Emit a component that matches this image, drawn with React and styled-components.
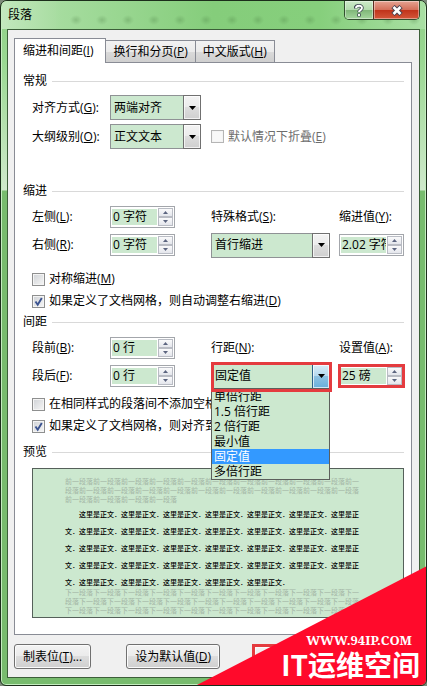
import React, { useState } from 'react';
import styled, { createGlobalStyle, css } from 'styled-components';

const GlobalStyle = createGlobalStyle`
  *, *::before, *::after {
    box-sizing: border-box;
  }

  body {
    margin: 0;
    background: #7d8a7a;
    color: #000;
    font-family: "Open Sans", "Noto Sans CJK SC", sans-serif;
    font-size: 12px;
    line-height: 16px;
  }

  button, input, select {
    margin: 0;
    color: inherit;
    font: inherit;
  }
`;

const FIELD = '#cce8cf';

const Window = styled.main`
  position: relative;
  overflow: hidden;
  min-height: 100vh;
  display: flex;
  flex-direction: column;
  padding: 0 6px 7px;
  border: 1px solid #1c2e1b;
  border-radius: 7px 7px 6px 6px;
  background: linear-gradient(#8fcf86 0, #9ad892 60px, #cfe9cb 189px, #78bc6e 190px, #78bc6e 100%);
  box-shadow: inset 0 0 0 1px #c5edc0;
`;

const TitleBar = styled.header`
  display: flex;
  justify-content: space-between;
  align-items: flex-start;
  height: 28px;
  margin: 0 -5px;
  padding: 0 5px 0 6px;
  background:
    radial-gradient(ellipse 6px 5px at 14px 19px, rgba(70, 120, 62, 0.28), transparent) 60px 0 / 26px 28px repeat-x,
    linear-gradient(90deg, #c3e8be 0, #a5dc9e 60px, #85cd7b 50%, #86cf7c 75%, #a9dfa3 100%);
  background-clip: content-box, border-box;
`;

const Title = styled.h1`
  margin: 0;
  padding: 6px 24px 6px 0;
  font-size: 12px;
  font-weight: 400;
  background: linear-gradient(90deg, #bfe7ba, #a9dda2);
`;

const WindowButtons = styled.div`
  display: flex;
  overflow: hidden;
  border: 1px solid #32502f;
  border-top: 0;
  border-radius: 0 0 5px 5px;
`;

const WindowButton = styled.button`
  display: flex;
  align-items: center;
  justify-content: center;
  width: ${({ $close }) => ($close ? 46 : 28)}px;
  height: 18px;
  padding: 0;
  border: 0;
  border-left: ${({ $close }) => ($close ? '1px solid #5b2c20' : 0)};
  background: ${({ $close }) => ($close
    ? 'linear-gradient(#e5a493 0, #d4705a 48%, #c0321a 50%, #d4573a 100%)'
    : 'linear-gradient(#cdeac9 0, #b3dcae 48%, #7fb678 50%, #a5d79e 100%)')};
  box-shadow: inset 0 0 0 1px rgba(255, 255, 255, 0.4);
`;

const Client = styled.div`
  flex: 1;
  padding: 8px 7px 8px 6px;
  border: 1px solid #3c5f39;
  background: #f0f0f0;
`;

const Tabs = styled.div`
  display: flex;
  align-items: flex-end;
`;

const Tab = styled.button`
  height: 22px;
  padding: 0 7px;
  border: 1px solid #898c95;
  border-bottom: 0;
  background: linear-gradient(#f2f2f2 0, #ebebeb 50%, #dadada 52%, #cfcfcf 100%);

  & + & {
    border-left: 0;
  }

  ${({ $active }) => $active && css`
    position: relative;
    z-index: 1;
    height: 25px;
    margin-bottom: -1px;
    padding: 0 12px 0 8px;
    background: #fff;
  `}
`;

const Panel = styled.form`
  padding: 8px 7px 16px 8px;
  border: 1px solid #898c95;
  background: #fff;
`;

const Section = styled.fieldset`
  min-width: 0;
  margin: 0 0 ${({ $gap }) => $gap || 0}px;
  padding: 0;
  border: 0;
`;

const Legend = styled.legend`
  display: flex;
  align-items: center;
  gap: 5px;
  width: 100%;
  height: 20px;
  padding: 0;

  &::after {
    content: '';
    flex: 1;
    height: 1px;
    background: #d9d9d9;
  }
`;

const Fields = styled.div`
  display: grid;
  grid-template-columns: 78px 101px 1fr 65px;
  grid-auto-rows: ${({ $row }) => $row || 28}px;
  align-items: center;
  padding: 2px 0 0 9px;
`;

const Checks = styled.div`
  padding: ${({ $top }) => $top}px 0 0 9px;
`;

const CheckLabel = styled.label`
  display: flex;
  align-items: center;
  gap: 4px;
  height: 22px;
  white-space: nowrap;
  color: ${({ $disabled }) => ($disabled ? '#6d6d6d' : 'inherit')};
`;

const WideCell = styled.div`
  grid-column: span 2;
`;

const CheckBox = styled.span`
  display: grid;
  width: 13px;
  height: 13px;

  input, svg {
    grid-area: 1 / 1;
    width: 13px;
    height: 13px;
  }

  input {
    appearance: none;
    border: 1px solid #8e8f8f;
    background: linear-gradient(135deg, #cfd2d6, #f6f6f6);
    box-shadow: inset 0 0 0 1px #f4f4f4;
  }

  input:disabled {
    border-color: #b5b5b5;
    background: #f8f8f8;
  }

  svg {
    pointer-events: none;
  }
`;

const SelectBox = styled.div`
  position: relative;
  display: grid;
  width: ${({ $wide }) => ($wide ? 'calc(100% - 9px)' : '91px')};
  height: 25px;
`;

const NativeSelect = styled.select`
  grid-area: 1 / 1;
  appearance: none;
  width: 100%;
  padding: 0 20px 0 3px;
  border: 1px solid #8f9295;
  border-radius: 0;
  background: ${FIELD};
  outline: 0;
`;

const DropArrow = styled.span`
  grid-area: 1 / 1;
  justify-self: end;
  display: flex;
  align-items: center;
  justify-content: center;
  width: 18px;
  border: 1px solid ${({ $open }) => ($open ? '#2c628b' : '#707070')};
  background: ${({ $open }) => ($open
    ? 'linear-gradient(#d8ecf8 0, #b4d9ee 48%, #8ec2e2 50%, #68b0dc 100%)'
    : 'linear-gradient(#f3f3f3 0, #ebebeb 48%, #dddddd 50%, #cfcfcf 100%)')};
  box-shadow: inset 0 0 0 1px rgba(255, 255, 255, 0.7);
  pointer-events: none;
`;

const Marker = styled.span`
  position: absolute;
  z-index: 3;
  inset: ${({ $inset }) => $inset};
  border: 3px solid #e43b3f;
  pointer-events: none;
`;

const OptionList = styled.ul`
  position: absolute;
  z-index: 2;
  top: 24px;
  left: 0;
  width: 100%;
  margin: 0;
  padding: 0;
  border: 1px solid #5c5f5c;
  background: ${FIELD};
  list-style: none;
`;

const Option = styled.li`
  height: 15px;
  padding-left: 2px;
  line-height: 15px;
  color: ${({ $selected }) => ($selected ? '#fff' : '#000')};
  background: ${({ $selected }) => ($selected ? '#3399ff' : 'transparent')};
`;

const SpinBox = styled.div`
  position: relative;
  display: flex;
  gap: 1px;
  width: 65px;
  height: 22px;
  padding: 1px;
  border: 1px solid #a3a6ab;
  background: #fff;

  input {
    flex: 1;
    min-width: 0;
    height: 16px;
    margin-top: 1px;
    padding: 0 0 0 1px;
    border: 0;
    background: ${FIELD};
    outline: 0;
  }
`;

const SpinButtons = styled.div`
  display: flex;
  flex-direction: column;
  width: 15px;
`;

const SpinButton = styled.button`
  flex: 1;
  display: flex;
  align-items: center;
  justify-content: center;
  min-height: 0;
  padding: 0;
  border: 1px solid #b9bcc4;
  background: linear-gradient(#fafafb, #e4e6ec);
`;

const Preview = styled.div`
  overflow: hidden;
  height: 150px;
  margin: 6px 0 0 9px;
  padding: 8px 40px 0 32px;
  border: 1px solid #55605a;
  background: ${FIELD};
  font-family: "Noto Sans CJK SC", sans-serif;
  font-size: 7px;
  line-break: anywhere;

  p {
    margin: 0;
  }
`;

const Faded = styled.p`
  color: #a3b5a5;
  line-height: 9px;
`;

const Body = styled.p`
  padding-top: 2px;
  line-height: 17px;
  text-indent: 2em;
  font-weight: 500;

  && {
    margin-bottom: -3px;
  }
`;

const Footer = styled.footer`
  display: flex;
  align-items: center;
  margin-top: 9px;
`;

const PushButton = styled.button`
  height: 25px;
  margin-right: 35px;
  padding: 0 8px;
  border: 1px solid #707070;
  border-radius: 3px;
  background: linear-gradient(#f3f3f3 0, #ebebeb 48%, #dddddd 50%, #cfcfcf 100%);
  box-shadow: inset 0 0 0 1px #fbfbfb;
  white-space: nowrap;
`;

const OkButton = styled(PushButton)`
  width: 76px;
  margin: 0 0 0 -3px;
  border: 3px solid #e43b3f;
  border-radius: 0;
`;

const Banner = styled.aside`
  position: absolute;
  z-index: 5;
  right: -1px;
  bottom: -1px;
  display: flex;
  flex-direction: column;
  align-items: flex-end;
  justify-content: flex-end;
  width: 232px;
  height: 120px;
  padding: 0 7px 6px 0;
  color: #fff;
  background: #ff0a2b;
  clip-path: polygon(0 100%, 100% 0, 100% 100%);
`;

const Site = styled.span`
  padding-right: 8px;
  font: 700 13px/16px "Noto Serif", "DejaVu Serif", serif;
`;

const Brand = styled.strong`
  font: 700 28px/32px "Noto Sans CJK SC", sans-serif;
  white-space: nowrap;
`;

// text followed by its underlined access key, e.g. 左侧(L):
function Key({ text, k, end = '' }) {
  return (
    <span>
      {text}
      (
      <u>{k}</u>
      )
      {end}
    </span>
  );
}

function Triangle({ up, small }) {
  const size = small ? 5 : 7;
  return (
    <svg width={size} height={small ? 3 : 4} viewBox="0 0 8 4" preserveAspectRatio="none" aria-hidden="true">
      <path d={up ? 'M0 4L4 0l4 4z' : 'M0 0h8L4 4z'} fill={small ? '#5c6580' : '#000'} />
    </svg>
  );
}

function Check({
  text, k, checked, disabled,
}) {
  const [on, setOn] = useState(Boolean(checked));
  return (
    <CheckLabel $disabled={disabled}>
      <CheckBox>
        <input type="checkbox" checked={on} disabled={disabled} onChange={() => setOn(!on)} />
        {on && (
          <svg viewBox="0 0 13 13" aria-hidden="true">
            <path d="M3.5 6.5l2.2 3.2L9.8 3" fill="none" stroke="#3b5390" strokeWidth="1.9" />
          </svg>
        )}
      </CheckBox>
      <Key text={text} k={k} />
    </CheckLabel>
  );
}

function Select({
  id, value, wide, options,
}) {
  return (
    <SelectBox $wide={wide}>
      <NativeSelect id={id} defaultValue={value}>
        {(options || [value]).map((o) => <option key={o}>{o}</option>)}
      </NativeSelect>
      <DropArrow $open={Boolean(options)}><Triangle /></DropArrow>
      {options && (
        <>
          <OptionList role="listbox">
            {options.map((o) => (
              <Option key={o} role="option" aria-selected={o === value} $selected={o === value}>{o}</Option>
            ))}
          </OptionList>
          <Marker $inset="-2px -2px -3px 0" />
        </>
      )}
    </SelectBox>
  );
}

function Spin({ id, value, marked }) {
  return (
    <SpinBox>
      <input id={id} type="text" defaultValue={value} />
      <SpinButtons>
        <SpinButton type="button" aria-label="+"><Triangle up small /></SpinButton>
        <SpinButton type="button" aria-label="-"><Triangle small /></SpinButton>
      </SpinButtons>
      {marked && <Marker $inset="-2px" />}
    </SpinBox>
  );
}

const spacings = ['单倍行距', '1.5 倍行距', '2 倍行距', '最小值', '固定值', '多倍行距'];

export default function App() {
  return (
    <>
      <GlobalStyle />
      <Window>
        <TitleBar>
          <Title>段落</Title>
          <WindowButtons>
            <WindowButton type="button" aria-label="?">
              <svg width="10" height="13" viewBox="0 0 10 13" fill="none" aria-hidden="true">
                <path d="M1.5 4.5C1.5 .9 8 .9 8 4c0 2-3 2-3 4.2M5 9.5v3" stroke="#414b55" strokeWidth="3.6" />
                <path d="M2 4.2C2 .9 8 .9 8 4c0 2-3 2.2-3 4M5 10v2" stroke="#fff" strokeWidth="1.9" />
              </svg>
            </WindowButton>
            <WindowButton type="button" $close aria-label="×">
              <svg width="12" height="11" viewBox="0 0 12 11" fill="none" aria-hidden="true">
                <path d="M2 1.5l8 8M10 1.5l-8 8" stroke="#4d4350" strokeWidth="4.6" />
                <path d="M2.5 2l7 7M9.5 2l-7 7" stroke="#fff" strokeWidth="2.6" />
              </svg>
            </WindowButton>
          </WindowButtons>
        </TitleBar>
        <Client>
          <Tabs role="tablist">
            <Tab type="button" role="tab" aria-selected="true" $active><Key text="缩进和间距" k="I" /></Tab>
            <Tab type="button" role="tab" aria-selected="false"><Key text="换行和分页" k="P" /></Tab>
            <Tab type="button" role="tab" aria-selected="false"><Key text="中文版式" k="H" /></Tab>
          </Tabs>
          <Panel onSubmit={(e) => e.preventDefault()}>
            <Section $gap={30}>
              <Legend>常规</Legend>
              <Fields $row={29}>
                <label htmlFor="align"><Key text="对齐方式" k="G" end=":" /></label>
                <Select id="align" value="两端对齐" />
                <WideCell />
                <label htmlFor="outline"><Key text="大纲级别" k="O" end=":" /></label>
                <Select id="outline" value="正文文本" />
                <WideCell><Check text="默认情况下折叠" k="E" disabled /></WideCell>
              </Fields>
            </Section>

            <Section>
              <Legend>缩进</Legend>
              <Fields>
                <label htmlFor="left"><Key text="左侧" k="L" end=":" /></label>
                <Spin id="left" value="0 字符" />
                <label htmlFor="special"><Key text="特殊格式" k="S" end=":" /></label>
                <label htmlFor="by"><Key text="缩进值" k="Y" end=":" /></label>
                <label htmlFor="right"><Key text="右侧" k="R" end=":" /></label>
                <Spin id="right" value="0 字符" />
                <Select id="special" value="首行缩进" wide />
                <Spin id="by" value="2.02 字符" />
              </Fields>
              <Checks $top={9}>
                <Check text="对称缩进" k="M" />
                <Check text="如果定义了文档网格，则自动调整右缩进" k="D" checked />
              </Checks>
            </Section>

            <Section $gap={5}>
              <Legend>间距</Legend>
              <Fields>
                <label htmlFor="before"><Key text="段前" k="B" end=":" /></label>
                <Spin id="before" value="0 行" />
                <label htmlFor="spacing"><Key text="行距" k="N" end=":" /></label>
                <label htmlFor="at"><Key text="设置值" k="A" end=":" /></label>
                <label htmlFor="after"><Key text="段后" k="F" end=":" /></label>
                <Spin id="after" value="0 行" />
                <Select id="spacing" value="固定值" options={spacings} wide />
                <Spin id="at" value="25 磅" marked />
              </Fields>
              <Checks $top={3}>
                <Check text="在相同样式的段落间不添加空格" k="C" />
                <Check text="如果定义了文档网格，则对齐到网格" k="W" checked />
              </Checks>
            </Section>

            <Section>
              <Legend>预览</Legend>
              <Preview>
                <Faded>{'前一段落'.repeat(25)}</Faded>
                <Body>{'这里是正文．'.repeat(33)}</Body>
                <Faded>{'下一段落'.repeat(31)}</Faded>
              </Preview>
            </Section>
          </Panel>
          <Footer>
            <PushButton type="button">
              <Key text="制表位" k="T" end="..." />
            </PushButton>
            <PushButton type="button"><Key text="设为默认值" k="D" /></PushButton>
            <OkButton type="submit" aria-label="确定" />
          </Footer>
        </Client>
        <Banner>
          <Site>WWW.94IP.COM</Site>
          <Brand>IT运维空间</Brand>
        </Banner>
      </Window>
    </>
  );
}
